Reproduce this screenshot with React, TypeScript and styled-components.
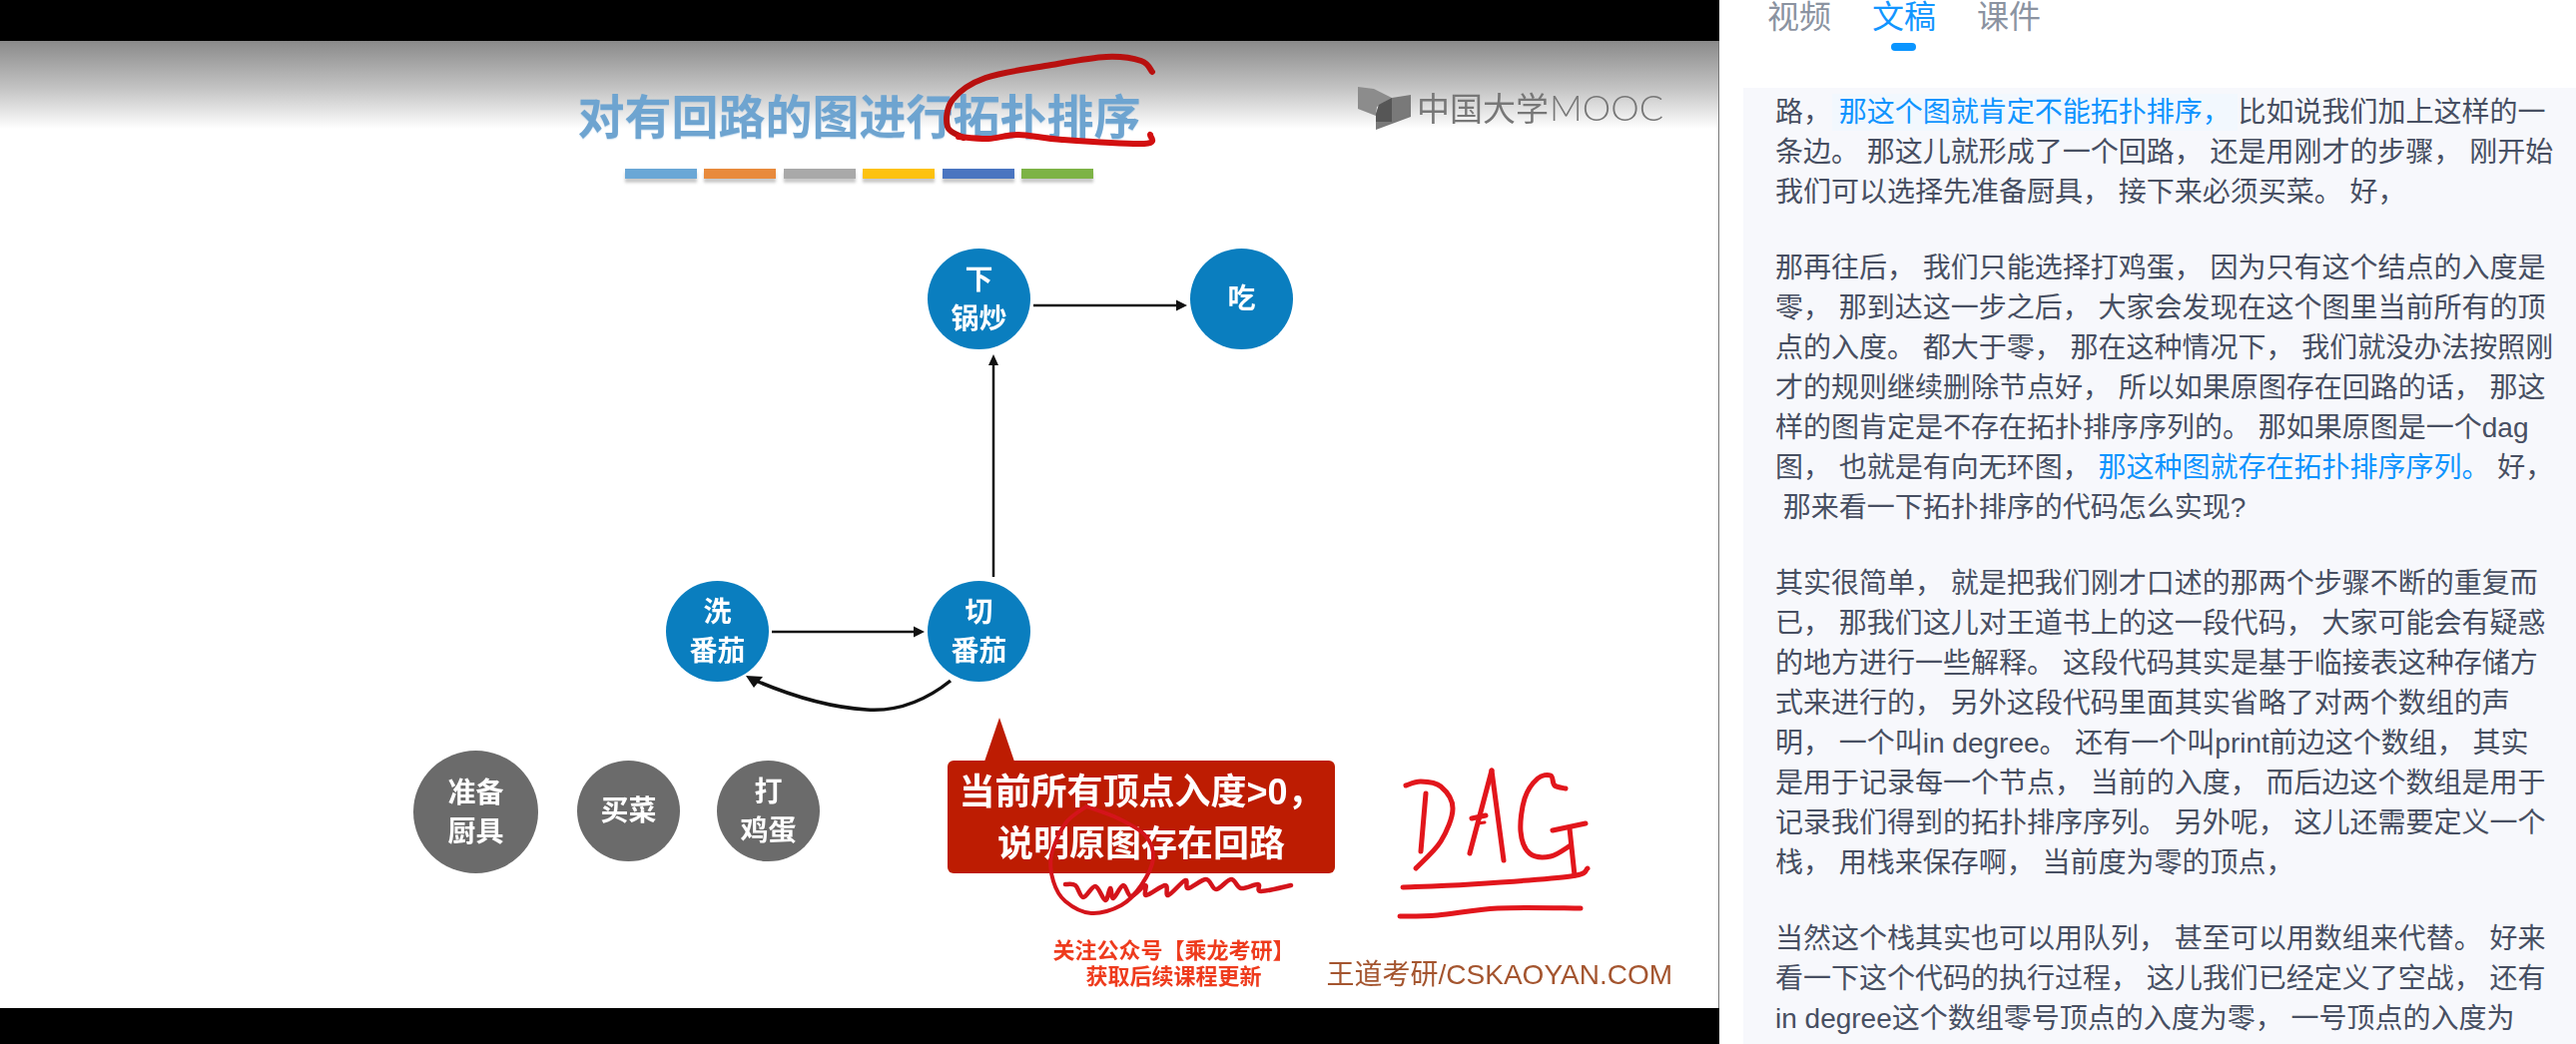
import React from "react";
import styled, { createGlobalStyle } from "styled-components";

const CJK = `"Liberation Sans", "Noto Sans CJK SC", sans-serif`;

const GlobalStyle = createGlobalStyle`
  html, body {
    margin: 0;
    padding: 0;
    background: #fff;
    overflow: hidden;
  }
`;

const Page = styled.div`
  display: flex;
  width: 2580px;
  height: 1046px;
  overflow: hidden;
  font-family: ${CJK};
`;

const VideoColumn = styled.div`
  display: flex;
  flex-direction: column;
  width: 1722px;
  flex-shrink: 0;
  background: #000;
`;

const BlackBar = styled.div<{ $height: number }>`
  height: ${(p) => p.$height}px;
  flex-shrink: 0;
`;

const Slide = styled.div`
  position: relative;
  display: flex;
  flex-direction: column;
  align-items: center;
  box-sizing: border-box;
  height: 969px;
  padding-top: 47px;
  border-right: 1px solid #777;
  overflow: hidden;
  background: linear-gradient(#8a8a8a 0, #c4c4c4 48px, #fff 88px);
  filter: blur(0.6px);
`;

const Title = styled.div`
  height: 60px;
  font-size: 47px;
  line-height: 60px;
  font-weight: 700;
  color: #6ea4d0;
  text-shadow: 0 1px 1px rgba(110, 164, 208, 0.35);
`;

const BarRow = styled.div`
  display: flex;
  gap: 7.6px;
  margin-top: 21px;
`;

const ColorBar = styled.div<{ $color: string }>`
  width: 72px;
  height: 10px;
  background: ${(p) => p.$color};
  box-shadow: 0 4px 3px rgba(120, 120, 120, 0.4);
`;

const Logo = styled.div`
  position: absolute;
  left: 1360px;
  top: 44px;
  display: flex;
  align-items: center;
  gap: 4px;
  color: #777;
  font-size: 33px;
  font-weight: 400;
  line-height: 44px;
`;

const LogoLatin = styled.span`
  font-family: "Lato", "Liberation Sans", sans-serif;
  font-size: 36px;
  font-weight: 300;
  margin-left: 1px;
`;

const Node = styled.div<{ $left: number; $top: number; $size: number; $color: string }>`
  position: absolute;
  left: ${(p) => p.$left}px;
  top: ${(p) => p.$top}px;
  width: ${(p) => p.$size}px;
  height: ${(p) => p.$size - 2}px;
  display: flex;
  flex-direction: column;
  align-items: center;
  justify-content: center;
  border-radius: 50%;
  background: ${(p) => p.$color};
  color: #fff;
  font-size: 28px;
  font-weight: 700;
  line-height: 39px;
`;

const Callout = styled.div`
  position: absolute;
  left: 949px;
  top: 721px;
  box-sizing: border-box;
  width: 388px;
  height: 113px;
  padding-top: 6px;
  border-radius: 6px;
  background: #bd1c02;
  color: #fff;
  font-size: 36px;
  font-weight: 700;
  line-height: 52px;
  text-align: center;
  white-space: pre;

  &::before {
    content: "";
    position: absolute;
    left: 37px;
    top: -43px;
    width: 30px;
    height: 44px;
    background: #bd1c02;
    clip-path: polygon(50% 0, 100% 100%, 0 100%);
  }
`;

const Overlay = styled.svg`
  position: absolute;
  left: 0;
  top: 0;
  width: 1721px;
  height: 969px;
  pointer-events: none;
`;

const Footer = styled.div`
  display: flex;
  align-self: stretch;
  align-items: flex-end;
  justify-content: flex-end;
  gap: 32px;
  margin-top: auto;
  padding: 0 46px 18px 0;
`;

const Promo = styled.div`
  color: #ee3b1d;
  font-size: 22px;
  font-weight: 700;
  line-height: 26px;
  text-align: center;
`;

const Brand = styled.div`
  color: #a4552f;
  font-size: 28px;
  line-height: 30px;
  white-space: nowrap;
`;

const Sidebar = styled.div`
  display: flex;
  flex-direction: column;
  flex: 1;
  min-width: 0;
  background: #fff;
`;

const Tabs = styled.div`
  display: flex;
  gap: 41px;
  height: 88px;
  flex-shrink: 0;
  padding-left: 48px;
`;

const Tab = styled.div<{ $active?: boolean }>`
  position: relative;
  width: 64px;
  height: 34px;
  color: ${(p) => (p.$active ? "#1296ff" : "#8b93a1")};
  font-size: 32px;
  line-height: 34px;

  ${(p) =>
    p.$active &&
    `&::after {
      content: "";
      position: absolute;
      left: 19px;
      top: 43px;
      width: 25px;
      height: 8px;
      border-radius: 4px;
      background: #0a95ff;
    }`}
`;

const Panel = styled.div`
  flex: 1;
  min-height: 0;
  margin-left: 24px;
  padding: 5px 0 0 32px;
  overflow: hidden;
  background: #f7f8fc;
`;

const Paragraph = styled.div`
  margin-bottom: 36px;
  color: #474f62;
  font-size: 28px;
  line-height: 40px;
`;

const Line = styled.div`
  height: 40px;
  white-space: pre;
`;

const Mark = styled.span<{ $tinted?: boolean }>`
  color: #0f94ff;
  ${(p) =>
    p.$tinted &&
    `background: #f2f8fe;
     padding: 3px 7px;
     margin: 0 -7px;`}
`;

type Point = [number, number];

// catmull-rom through the traced points so the pen strokes keep their wobble
const smooth = (pts: Point[]) => {
  let d = `M${pts[0][0]} ${pts[0][1]}`;
  for (let i = 0; i < pts.length - 1; i++) {
    const p0 = pts[Math.max(i - 1, 0)];
    const p1 = pts[i];
    const p2 = pts[i + 1];
    const p3 = pts[Math.min(i + 2, pts.length - 1)];
    const c1x = p1[0] + (p2[0] - p0[0]) / 6;
    const c1y = p1[1] + (p2[1] - p0[1]) / 6;
    const c2x = p2[0] - (p3[0] - p1[0]) / 6;
    const c2y = p2[1] - (p3[1] - p1[1]) / 6;
    d += ` C${c1x} ${c1y} ${c2x} ${c2y} ${p2[0]} ${p2[1]}`;
  }
  return d;
};

const Ink = ({ pts, color = "#e2161c", width = 5 }: { pts: Point[]; color?: string; width?: number }) => (
  <path d={smooth(pts)} fill="none" stroke={color} strokeWidth={width} strokeLinecap="round" strokeLinejoin="round" />
);

const Annotations = () => (
  <Overlay viewBox="0 41 1721 969">
    {/* graph edges */}
    <g stroke="#111" strokeWidth={2.5} fill="none">
      <path d="M1035 306H1180" />
      <path d="M995 578V362" />
      <path d="M773 633H917" />
      <path d="M952 682Q912 714 868 711Q818 708 757 682" strokeWidth={3.5} />
    </g>
    <g fill="#111">
      <polygon points="1189,306 1178,300.5 1178,311.5" />
      <polygon points="995,355 990,366 1000,366" />
      <polygon points="926,633 915,627.5 915,638.5" />
      <polygon points="747,677 764,678 755,689" />
    </g>

    {/* teacher's pen marks */}
    <Ink
      color="#b8100f"
      width={6}
      pts={[[1154, 72], [1143, 61], [1108, 57], [1053, 65], [987, 78], [954, 100], [949, 127], [965, 138]]}
    />
    <Ink
      color="#d20f10"
      width={6}
      pts={[[960, 137], [990, 139], [1020, 135], [1064, 140], [1146, 144], [1152, 135]]}
    />
    <Ink
      color="#d4141b"
      width={4}
      pts={[[1088, 808], [1067, 825], [1053, 857], [1055, 883], [1067, 903], [1093, 915], [1123, 907], [1143, 887], [1155, 860], [1147, 837], [1120, 820], [1088, 808]]}
    />
    <Ink
      color="#d4141b"
      width={4.5}
      pts={[[1067, 886], [1077, 887], [1085, 899], [1097, 888], [1107, 902], [1112, 890], [1115, 900], [1125, 887], [1133, 898], [1147, 887], [1148, 897], [1167, 887], [1170, 897], [1187, 882], [1190, 890], [1208, 881], [1218, 891], [1233, 881], [1243, 890], [1260, 886], [1263, 893], [1293, 887]]}
    />
    <Ink pts={[[1428, 795], [1423, 853]]} />
    <Ink pts={[[1408, 787], [1423, 783], [1443, 788], [1455, 810], [1443, 843], [1418, 870]]} />
    <Ink pts={[[1472, 855], [1494, 772]]} />
    <Ink pts={[[1494, 772], [1506, 862]]} />
    <Ink pts={[[1474, 820], [1488, 817]]} />
    <Ink pts={[[1480, 825], [1487, 824]]} width={3} />
    <Ink pts={[[1568, 790], [1557, 787], [1553, 777], [1540, 780], [1527, 800], [1523, 833], [1532, 855], [1553, 858], [1573, 847]]} />
    <Ink pts={[[1555, 832], [1588, 825]]} />
    <Ink pts={[[1572, 830], [1577, 877]]} />
    <Ink pts={[[1405, 889], [1473, 886], [1573, 878], [1590, 870]]} />
    <Ink pts={[[1402, 918], [1440, 917], [1500, 910], [1583, 910]]} />
  </Overlay>
);

const LogoMark = () => (
  <svg width="55" height="44" viewBox="1361 85 55 44">
    <polygon points="1361,85 1377,87 1395,96 1380,105 1379,114 1361,107" fill="#8c8c8c" />
    <polygon points="1379,113 1379,128 1414,115 1414,93 1395,96 1382,103" fill="#797979" />
    <polygon points="1382,103 1395,96 1395,120 1379,120 1379,112" fill="#565656" />
  </svg>
);

const BARS = ["#6aa7d6", "#e88a3c", "#a9a9a9", "#fdc20f", "#4a75c0", "#7db346"];
const BLUE = "#0a7ebf";
const GRAY = "#6b6b6b";

const App = () => {
  return (
    <Page>
      <GlobalStyle />
      <VideoColumn>
        <BlackBar $height={41} />
        <Slide>
          <Title>对有回路的图进行拓扑排序</Title>
          <BarRow>
            {BARS.map((c) => (
              <ColorBar key={c} $color={c} />
            ))}
          </BarRow>
          <Logo>
            <LogoMark />
            <span>
              中国大学<LogoLatin>MOOC</LogoLatin>
            </span>
          </Logo>

          <Node $left={929} $top={208} $size={103} $color={BLUE}>
            <div>下</div>
            <div>锅炒</div>
          </Node>
          <Node $left={1192} $top={208} $size={103} $color={BLUE}>
            吃
          </Node>
          <Node $left={667} $top={541} $size={103} $color={BLUE}>
            <div>洗</div>
            <div>番茄</div>
          </Node>
          <Node $left={929} $top={541} $size={103} $color={BLUE}>
            <div>切</div>
            <div>番茄</div>
          </Node>
          <Node $left={414} $top={711} $size={125} $color={GRAY}>
            <div>准备</div>
            <div>厨具</div>
          </Node>
          <Node $left={578} $top={721} $size={103} $color={GRAY}>
            买菜
          </Node>
          <Node $left={718} $top={721} $size={103} $color={GRAY}>
            <div>打</div>
            <div>鸡蛋</div>
          </Node>

          <Callout>
            <div>当前所有顶点入度&gt;0，</div>
            <div>说明原图存在回路</div>
          </Callout>
          <Annotations />

          <Footer>
            <Promo>
              <div>关注公众号【乘龙考研】</div>
              <div>获取后续课程更新</div>
            </Promo>
            <Brand>王道考研/CSKAOYAN.COM</Brand>
          </Footer>
        </Slide>
        <BlackBar $height={36} />
      </VideoColumn>

      <Sidebar>
        <Tabs>
          <Tab>视频</Tab>
          <Tab $active>文稿</Tab>
          <Tab>课件</Tab>
        </Tabs>
        <Panel>
          <Paragraph>
            <Line>
              路， <Mark $tinted>那这个图就肯定不能拓扑排序，</Mark> 比如说我们加上这样的一
            </Line>
            <Line>条边。 那这儿就形成了一个回路， 还是用刚才的步骤， 刚开始</Line>
            <Line>我们可以选择先准备厨具， 接下来必须买菜。 好，</Line>
          </Paragraph>
          <Paragraph>
            <Line>那再往后， 我们只能选择打鸡蛋， 因为只有这个结点的入度是</Line>
            <Line>零， 那到达这一步之后， 大家会发现在这个图里当前所有的顶</Line>
            <Line>点的入度。 都大于零， 那在这种情况下， 我们就没办法按照刚</Line>
            <Line>才的规则继续删除节点好， 所以如果原图存在回路的话， 那这</Line>
            <Line>样的图肯定是不存在拓扑排序序列的。 那如果原图是一个dag</Line>
            <Line>
              图， 也就是有向无环图， <Mark>那这种图就存在拓扑排序序列。</Mark> 好，
            </Line>
            <Line> 那来看一下拓扑排序的代码怎么实现?</Line>
          </Paragraph>
          <Paragraph>
            <Line>其实很简单， 就是把我们刚才口述的那两个步骤不断的重复而</Line>
            <Line>已， 那我们这儿对王道书上的这一段代码， 大家可能会有疑惑</Line>
            <Line>的地方进行一些解释。 这段代码其实是基于临接表这种存储方</Line>
            <Line>式来进行的， 另外这段代码里面其实省略了对两个数组的声</Line>
            <Line>明， 一个叫in degree。 还有一个叫print前边这个数组， 其实</Line>
            <Line>是用于记录每一个节点， 当前的入度， 而后边这个数组是用于</Line>
            <Line>记录我们得到的拓扑排序序列。 另外呢， 这儿还需要定义一个</Line>
            <Line>栈， 用栈来保存啊， 当前度为零的顶点，</Line>
          </Paragraph>
          <Paragraph>
            <Line>当然这个栈其实也可以用队列， 甚至可以用数组来代替。 好来</Line>
            <Line>看一下这个代码的执行过程， 这儿我们已经定义了空战， 还有</Line>
            <Line>in degree这个数组零号顶点的入度为零， 一号顶点的入度为</Line>
          </Paragraph>
        </Panel>
      </Sidebar>
    </Page>
  );
};

export default App;
